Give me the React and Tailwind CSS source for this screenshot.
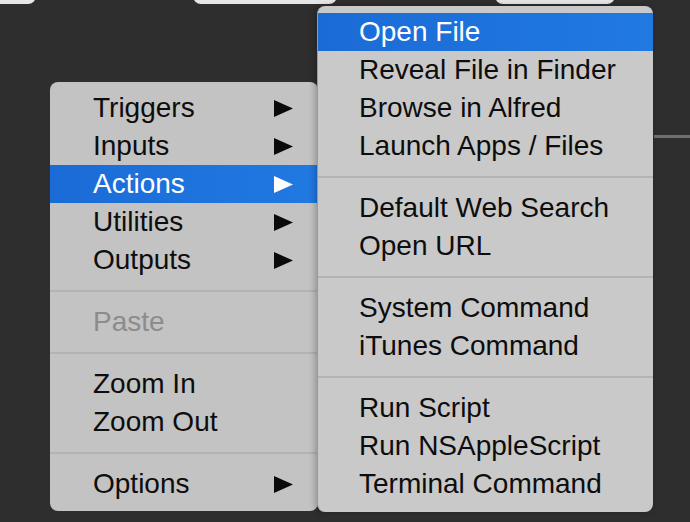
import React from "react";

const Arrow = ({ white }) => (
  <svg width="19" height="17" viewBox="0 0 19 17" className="shrink-0">
    <path d="M0 0 L19 8.5 L0 17 Z" fill={white ? "#ffffff" : "#0a0a0a"} />
  </svg>
);

const Row = ({ label, arrow, active, disabled }) => (
  <div
    className={
      "flex h-[38px] items-center justify-between pl-[43px] pr-[25px] " +
      (active ? "bg-[linear-gradient(90deg,#1b6bd6,#2179e2)] text-white" : disabled ? "text-[#8c8c8c]" : "text-[#0d0d0d]")
    }
  >
    <span className="leading-[38px]">{label}</span>
    {arrow && <Arrow white={active} />}
  </div>
);

const SubRow = ({ label, active }) => (
  <div
    className={
      "flex h-[38px] items-center pl-[41px] " +
      (active ? "bg-[linear-gradient(90deg,#1b6bd6,#2179e2)] text-white" : "text-[#0d0d0d]")
    }
  >
    <span className="leading-[38px]">{label}</span>
  </div>
);

const Sep = () => (
  <div className="flex h-[24px] items-center">
    <div className="h-[2px] w-full bg-[#b3b3b3]" />
  </div>
);

export default function App() {
  return (
    <div
      className="relative h-[522px] w-[690px] overflow-hidden bg-[#2e2e2e] text-[28px]"
      style={{ fontFamily: '"Liberation Sans", Arial, sans-serif' }}
    >
      {/* background desktop fragments */}
      <div className="absolute left-[-10px] top-[-10px] h-[14px] w-[46px] rounded-b-[8px] bg-[#e6e6e6]" />
      <div className="absolute left-[193px] top-[-10px] h-[14px] w-[144px] rounded-b-[8px] bg-[#e6e6e6]" />
      <div className="absolute left-[495px] top-[-10px] h-[14px] w-[120px] rounded-b-[8px] bg-[#e6e6e6]" />
      <div className="absolute left-[654px] top-[135px] h-[3px] w-[36px] bg-[#6f6f6f]" />

      {/* main menu */}
      <div className="absolute left-[50px] top-[82px] w-[268px] rounded-[8px] bg-[#c3c3c3] pb-[8px] pt-[7px]">
        <Row label="Triggers" arrow />
        <Row label="Inputs" arrow />
        <Row label="Actions" arrow active />
        <Row label="Utilities" arrow />
        <Row label="Outputs" arrow />
        <Sep />
        <Row label="Paste" disabled />
        <Sep />
        <Row label="Zoom In" />
        <Row label="Zoom Out" />
        <Sep />
        <Row label="Options" arrow />
      </div>

      {/* submenu */}
      <div className="absolute left-[317px] top-[6px] w-[336px] overflow-hidden rounded-[8px] border-l border-[#9a9a9a] bg-[#c9c9c9] pb-[9px] pt-[7px] shadow-[-2px_0_6px_rgba(0,0,0,0.25)]">
        <SubRow label="Open File" active />
        <SubRow label="Reveal File in Finder" />
        <SubRow label="Browse in Alfred" />
        <SubRow label="Launch Apps / Files" />
        <Sep />
        <SubRow label="Default Web Search" />
        <SubRow label="Open URL" />
        <Sep />
        <SubRow label="System Command" />
        <SubRow label="iTunes Command" />
        <Sep />
        <SubRow label="Run Script" />
        <SubRow label="Run NSAppleScript" />
        <SubRow label="Terminal Command" />
      </div>
    </div>
  );
}
